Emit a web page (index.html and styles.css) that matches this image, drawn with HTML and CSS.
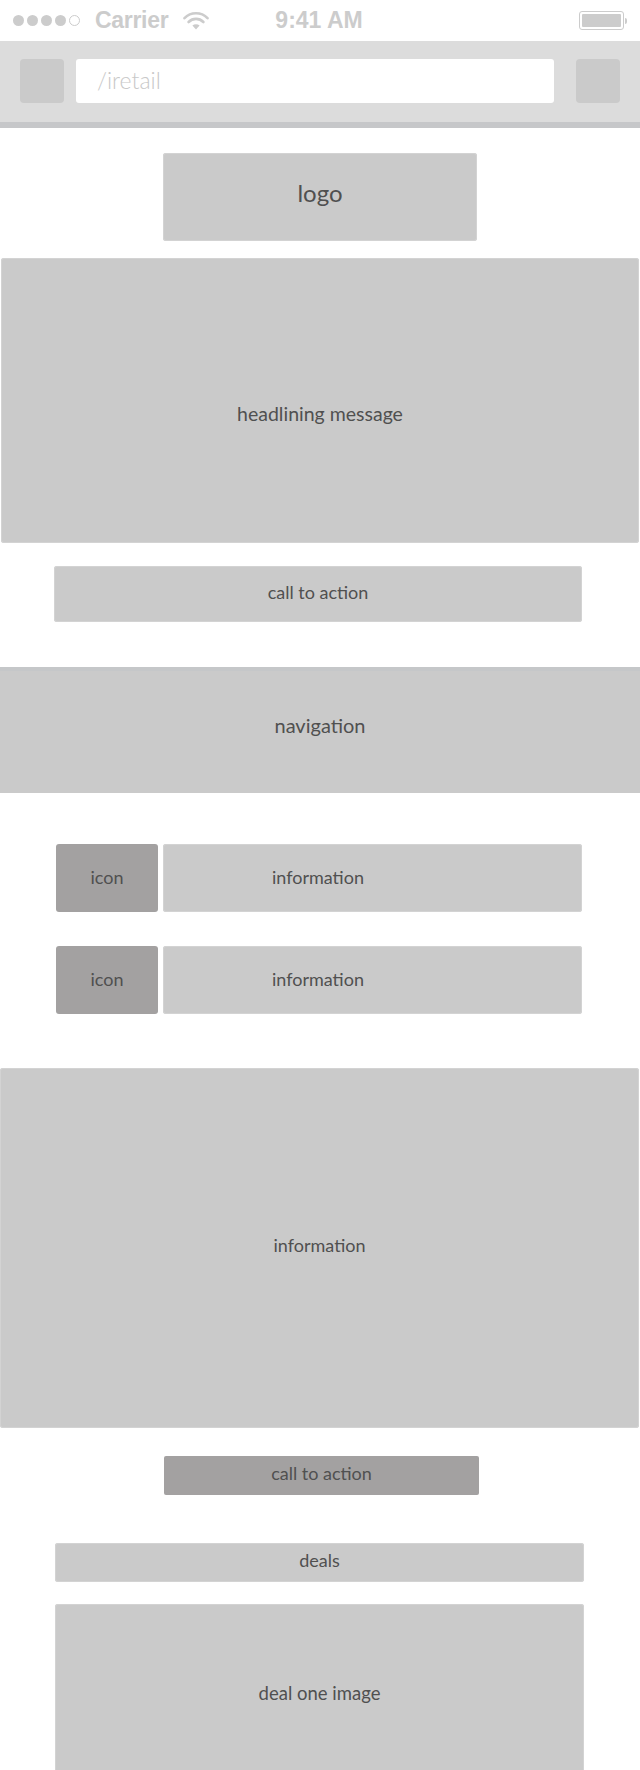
FILE: index.html
```html
<!DOCTYPE html>
<html>
<head>
<meta charset="utf-8">
<link rel="stylesheet" href="styles.css">
</head>
<body>
<div class="status">
  <div class="signal">
    <span class="dot"></span><span class="dot"></span><span class="dot"></span><span class="dot"></span><span class="dot empty"></span>
  </div>
  <span class="carrier">Carrier</span>
  <svg class="wifi" width="26" height="18" viewBox="0 0 26 18">
    <path d="M1.5 6.2 A16 16 0 0 1 24.5 6.2" fill="none" stroke="#cccccc" stroke-width="2.6" stroke-linecap="round"/>
    <path d="M5.6 10 A10.4 10.4 0 0 1 20.4 10" fill="none" stroke="#cccccc" stroke-width="2.6" stroke-linecap="round"/>
    <path d="M9.4 13.6 L13 17.4 L16.6 13.6 A5.2 5.2 0 0 0 9.4 13.6 Z" fill="#cccccc"/>
  </svg>
  <span class="time">9:41 AM</span>
  <div class="battery"><div class="battery-body"><div class="battery-fill"></div></div><div class="battery-nub"></div></div>
</div>
<div class="addr">
  <div class="addr-btn"></div>
  <div class="addr-input">/iretail</div>
  <div class="addr-btn right"></div>
</div>
<div class="page">
  <div class="box logo">logo</div>
  <div class="box headline">headlining message</div>
  <div class="box cta">call to action</div>
  <div class="box nav">navigation</div>
  <div class="rows">
    <div class="row">
      <div class="box icon">icon</div>
      <div class="box info">information</div>
    </div>
    <div class="row">
      <div class="box icon">icon</div>
      <div class="box info">information</div>
    </div>
  </div>
  <div class="box big-info">information</div>
  <div class="box cta2">call to action</div>
  <div class="box deals">deals</div>
  <div class="box deal-img">deal one image</div>
</div>
</body>
</html>
```
FILE: styles.css
```css
html, body {
  margin: 0;
  padding: 0;
  background: #ffffff;
}
body {
  width: 640px;
  height: 1770px;
  overflow: hidden;
  font-family: Lato, "Open Sans", sans-serif;
}
.status {
  height: 41px;
  display: flex;
  align-items: center;
  font-family: "Liberation Sans", Arial, sans-serif;
  font-weight: bold;
  color: #cccccc;
}
.signal {
  display: flex;
  gap: 3px;
  margin-left: 13px;
}
.dot {
  width: 11px;
  height: 11px;
  border-radius: 50%;
  background: #cccccc;
  box-sizing: border-box;
}
.dot.empty {
  background: transparent;
  border: 1px solid #cccccc;
}
.carrier {
  font-size: 23px;
  margin-left: 15px;
  letter-spacing: -0.3px;
}
.wifi {
  margin-left: 15px;
  margin-top: 1px;
}
.time {
  font-size: 23px;
  margin-left: 66px;
}
.battery {
  margin-left: auto;
  margin-right: 13px;
  display: flex;
  align-items: center;
}
.battery-body {
  width: 45px;
  height: 19px;
  box-sizing: border-box;
  border: 1px solid #cccccc;
  border-radius: 3px;
  padding: 2px;
}
.battery-fill {
  width: 100%;
  height: 100%;
  background: #cccccc;
  border-radius: 1px;
}
.battery-nub {
  width: 2px;
  height: 6px;
  background: #cccccc;
  border-radius: 0 2px 2px 0;
  margin-left: 1px;
}
.addr {
  height: 63px;
  padding: 18px 20px 0 20px;
  background: #dcdcdc;
  border-bottom: 6px solid #c6c7c9;
  display: flex;
}
.addr-btn {
  width: 44px;
  height: 44px;
  background: #cacaca;
  border-radius: 4px;
}
.addr-btn.right {
  margin-left: 22px;
}
.addr-input {
  flex: 1;
  height: 44px;
  margin-left: 12px;
  background: #ffffff;
  border-radius: 3px;
  box-sizing: border-box;
  padding-left: 21px;
  line-height: 42px;
  font-size: 23px;
  font-weight: 300;
  color: #c8c8c8;
}
.page {
  display: flex;
  flex-direction: column;
}
.box {
  background: #cacaca;
  border-radius: 3px;
  color: #505050;
  font-size: 18px;
  display: flex;
  align-items: center;
  justify-content: center;
  box-sizing: border-box;
  box-shadow: inset 0 0 0 1px #d3d3d3;
  padding-bottom: 3px;
}
.logo {
  margin: 25px auto 0 163px;
  width: 314px;
  height: 88px;
  font-size: 24px;
  padding-bottom: 9px;
}
.headline {
  margin: 17px 1px 0 1px;
  height: 285px;
  padding-top: 28px;
  font-size: 19.5px;
}
.cta {
  margin: 23px 0 0 54px;
  width: 528px;
  height: 56px;
  padding-bottom: 4px;
}
.nav {
  margin-top: 45px;
  height: 126px;
  border-radius: 0;
  border-top: 4px solid #c5c7c9;
  box-shadow: none;
  font-size: 20px;
  padding-bottom: 14px;
}
.rows {
  margin: 51px 0 0 56px;
  display: flex;
  flex-direction: column;
  gap: 34px;
}
.row {
  display: flex;
  gap: 5px;
  height: 68px;
}
.icon {
  width: 102px;
  background: #a3a1a1;
  box-shadow: none;
}
.info {
  width: 419px;
  justify-content: flex-start;
  padding-left: 109px;
}
.big-info {
  margin-top: 54px;
  width: 639px;
  height: 360px;
  padding-bottom: 6px;
}
.cta2 {
  margin: 28px 0 0 164px;
  width: 315px;
  height: 39px;
  background: #a3a1a1;
  box-shadow: none;
  border-radius: 2px;
  padding-bottom: 5px;
}
.deals {
  margin: 48px 0 0 55px;
  width: 529px;
  height: 39px;
  padding-bottom: 5px;
}
.deal-img {
  margin: 22px 0 0 55px;
  width: 529px;
  height: 180px;
  font-size: 18.5px;
}
```
